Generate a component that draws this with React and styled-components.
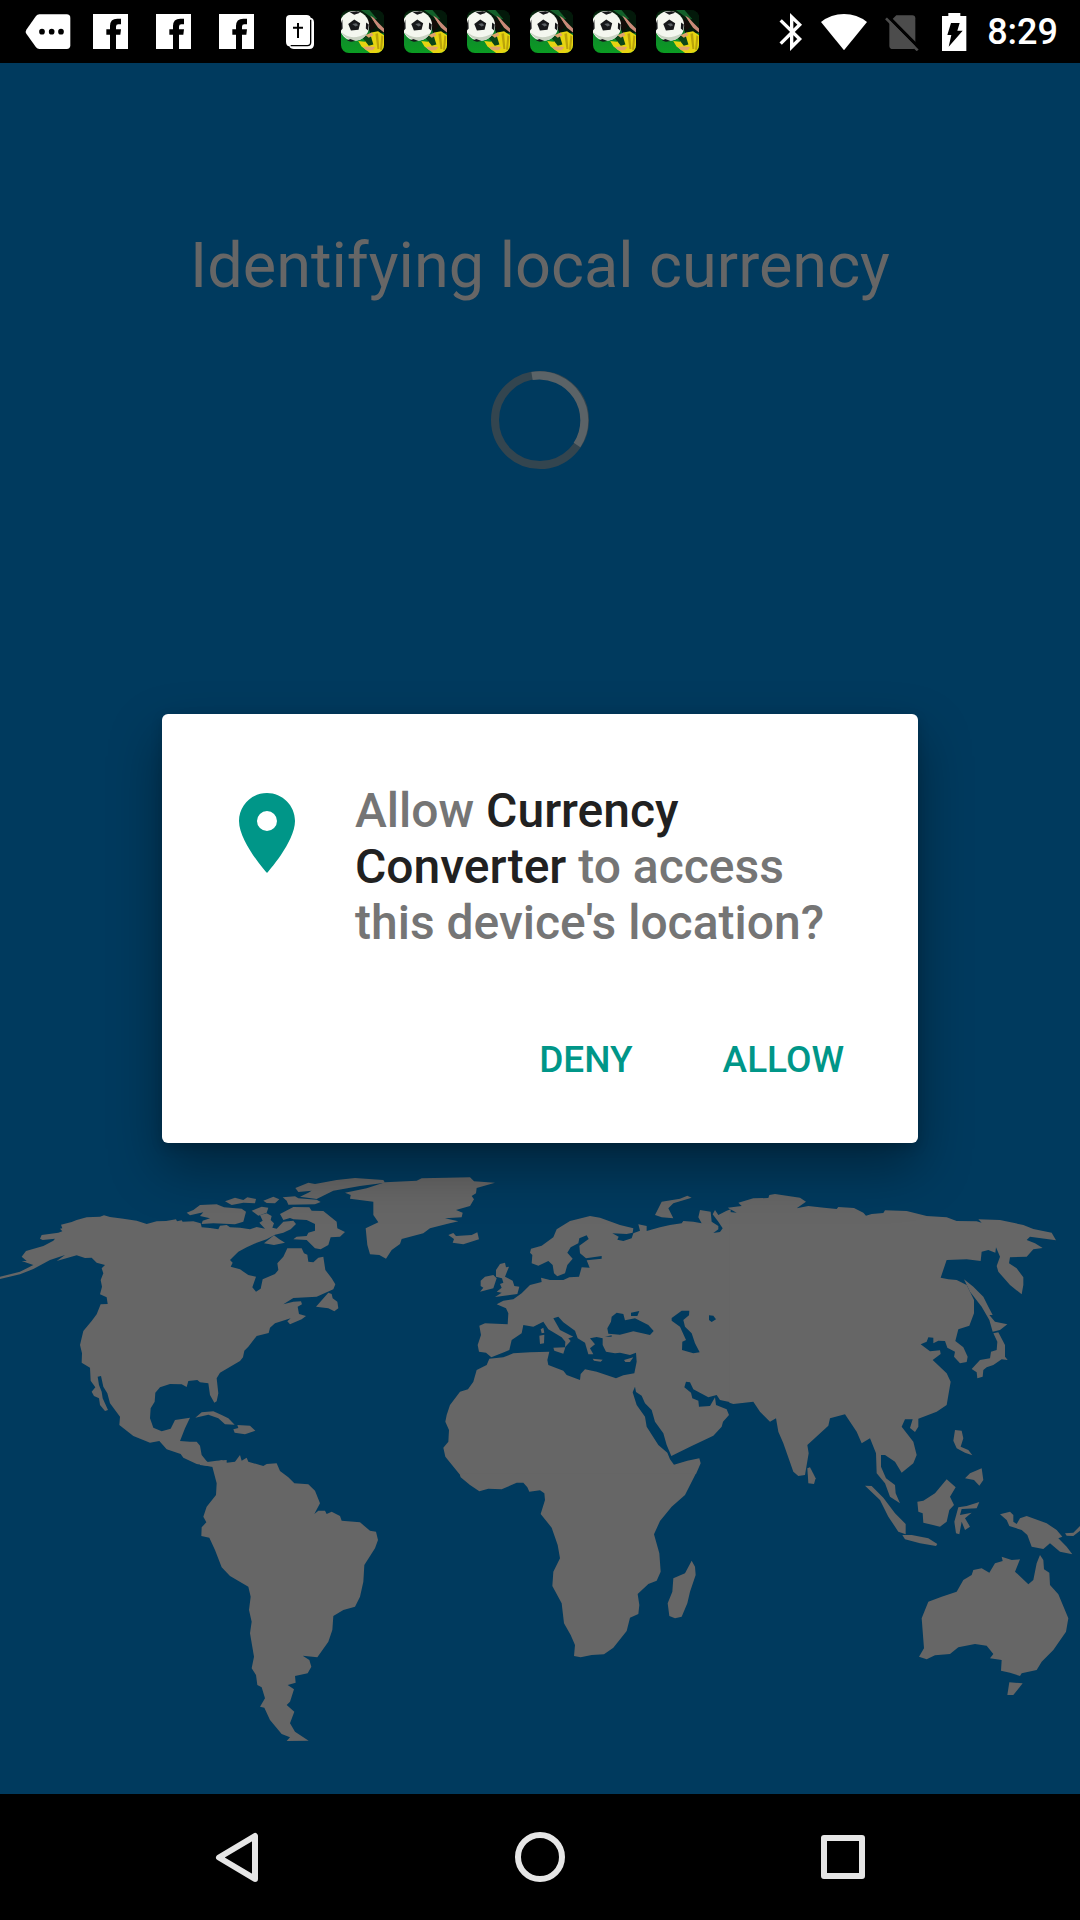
import React from "react";
import styled, { createGlobalStyle } from "styled-components";

const GlobalStyle = createGlobalStyle`
  body {
    margin: 0;
    background: #000;
    font-family: Roboto, "Liberation Sans", sans-serif;
  }
`;

const Screen = styled.div`
  display: flex;
  flex-direction: column;
  min-height: 100vh;
`;

const StatusBar = styled.header`
  display: flex;
  justify-content: space-between;
  align-items: center;
  height: 63px;
  padding: 0 22px 0 16px;
  background: #000;
  color: #fff;
`;

const Notifications = styled.div`
  display: flex;
`;

const NotificationSlot = styled.span`
  display: grid;
  place-items: center;
  width: 63px;
  height: 63px;
`;

const SystemIcons = styled.div`
  display: flex;
  align-items: center;
  gap: 18px;
`;

const Clock = styled.time`
  font-size: 36px;
  line-height: 44px;
  font-weight: 500;
`;

const Main = styled.main`
  flex: 1;
  display: grid;
  background: #003a5e;
`;

const Splash = styled.section`
  grid-area: 1 / 1;
  display: flex;
  flex-direction: column;
  align-items: center;
  padding: 166px 0 47px;
`;

const Title = styled.h1`
  margin: 0 0 68px;
  color: #666;
  font-size: 63px;
  line-height: 74px;
  font-weight: 400;
`;

const WorldMap = styled.svg`
  display: block;
  width: 100%;
  margin-top: auto;
  fill: #666;
  fill-rule: evenodd;
`;

const DialogLayer = styled.div`
  grid-area: 1 / 1;
  display: grid;
  grid-template-columns: 70%;
  place-content: center;
`;

const Dialog = styled.section`
  z-index: 1;
  padding: 69px 53px 35px 57px;
  border-radius: 6px;
  background: #fff;
  box-shadow: 0 24px 52px rgba(0, 0, 0, 0.36), 0 4px 12px rgba(0, 0, 0, 0.16);
`;

const DialogBody = styled.div`
  display: flex;
  align-items: flex-start;
  gap: 40px;
`;

const PinIcon = styled.svg`
  flex: none;
  width: 96px;
  height: 96px;
  margin-top: 2px;
  fill: #009688;
`;

const Message = styled.p`
  flex: 1;
  margin: 0;
  padding-right: 12px;
  color: #757575;
  font-size: 48px;
  line-height: 56px;
  font-weight: 500;
`;

const AppName = styled.strong`
  color: #212121;
  font-weight: 500;
`;

const Actions = styled.div`
  display: flex;
  justify-content: flex-end;
  gap: 48px;
  margin-top: 61px;
`;

const ActionButton = styled.button`
  height: 96px;
  padding: 0 21px;
  border: 0;
  background: none;
  color: #009688;
  font: 500 37px/44px Roboto, "Liberation Sans", sans-serif;
  text-transform: uppercase;
`;

const NavBar = styled.nav`
  display: flex;
  height: 126px;
  padding: 0 8%;
  background: #000;
`;

const NavButton = styled.button`
  flex: 1;
  display: grid;
  place-items: center;
  padding: 0;
  border: 0;
  background: none;
`;

const NavGlyph = styled.svg`
  width: 52px;
  height: 52px;
  fill: none;
  stroke: #e6e6e6;
  stroke-width: 6;
  stroke-linejoin: round;
`;

const MessageTag = () => (
  <svg width="46" height="36" viewBox="0 0 138 108">
    <path fill="#fff" d="M33 6Q37 1 43 1H125Q136 1 136 12V94Q136 105 125 105H43Q37 105 33 100L4 59Q0 53 4 47Z" />
    <circle cx="51" cy="53" r="8.500" />
    <circle cx="80" cy="53" r="8.500" />
    <circle cx="108" cy="53" r="8.500" />
  </svg>
);

const Facebook = () => (
  <svg width="35" height="35" viewBox="0 0 105 105">
    <path fill="#fff" d="M0 0H105V105H0Z" />
    <path fill="#000" d="M51 105V62H40V46H51V36Q51 14 73 14H84V31H76Q69 31 69 38V46H84L82 62H69V105Z" />
  </svg>
);

const Bible = () => (
  <svg width="28" height="34" viewBox="0 0 84 102">
    <path fill="#fff" d="M12 0H62Q72 0 74 8Q84 10 84 22V88Q84 102 70 102H24Q13 102 10 94Q0 92 0 80V12Q0 0 12 0Z" />
    <path fill="none" stroke="#000" strokeWidth="4" d="M74 14V82Q74 92 64 92H14" />
    <path stroke="#000" strokeWidth="6" d="M36 24V69M21 38H51" />
  </svg>
);

const Soccer = () => (
  <svg width="43" height="43" viewBox="0 0 130 130">
    <defs>
      <clipPath id="soccer-tile">
        <rect width="130" height="130" rx="24" />
      </clipPath>
      <linearGradient id="soccer-grass" x1="0" y1="0" x2="0" y2="1">
        <stop offset="0" stopColor="#041608" />
        <stop offset="0.6" stopColor="#0f8a2c" />
        <stop offset="1" stopColor="#0b9c22" />
      </linearGradient>
    </defs>
    <g clipPath="url(#soccer-tile)">
      <path fill="url(#soccer-grass)" d="M0 0H130V130H0Z" />
      <path fill="#03190a" d="M70 0H130V70L90 72L76 40Z" />
      <path fill="#12602a" d="M60 0H86L110 28L94 24Z" />
      <path fill="#c98a78" d="M88 17Q100 22 112 38L130 56V68L112 54L100 36Z" />
      <path fill="#120c08" d="M76 26L98 34L104 52L90 64Z" />
      <path fill="#e6d411" d="M92 68L112 64L130 76V130H88L62 110L52 94L72 96Z" />
      <path fill="#b9a30a" d="M104 72L110 118H116L112 70ZM122 76L118 120H124L128 80Z" />
      <path fill="#0b4517" d="M62 80L88 72L98 104L84 108Z" />
      <path fill="#e0a36c" d="M66 112Q84 108 104 112L96 122H76ZM74 76L92 68L98 76L84 84Z" />
      <circle cx="40" cy="48" r="45" fill="#f4f7ef" />
      <path fill="#c9d2c2" d="M0 66Q30 96 78 70Q64 94 40 92Q12 90 0 66Z" />
      <path fill="#16181a" d="M22 42L40 29L58 40L53 60L30 62ZM26 6L48 4L58 8L40 14ZM0 40L4 28L5 56L0 62ZM76 38L84 44L82 62L75 56ZM18 92L28 88L44 94L30 96Z" />
      <path fill="#5c6265" d="M34 42L46 40L52 46L44 50Z" />
    </g>
  </svg>
);

const Bluetooth = () => (
  <svg width="24" height="38" viewBox="0 0 72 114">
    <path fill="none" stroke="#fff" strokeWidth="10" d="M5 22L62 78L38 102V12L62 35L5 92" />
  </svg>
);

const Wifi = () => (
  <svg width="46" height="38" viewBox="0 0 138 114">
    <path fill="#fff" d="M0 27Q30 3 69 3T138 27L69 112Z" />
  </svg>
);

const NoSim = () => (
  <svg width="36" height="38" viewBox="0 0 108 114">
    <path fill="#4c4c4c" d="M34 7H82Q91 7 91 16V98Q91 108 82 108H24Q13 108 13 98V28Z" />
    <path stroke="#000" strokeWidth="10" d="M9 10L104 106" />
    <path stroke="#4c4c4c" strokeWidth="8" d="M3 16L98 112" />
  </svg>
);

const Battery = () => (
  <svg width="30" height="38" viewBox="0 0 90 114">
    <path fill="#fff" d="M28 0H64V9H82V114H9V9H28Z" />
    <path fill="#000" d="M36 30H62L55 53H71L29 101L37 66H25Z" />
  </svg>
);

const Spinner = () => (
  <svg width="98" height="98" viewBox="0 0 98 98" role="img" aria-label="Loading">
    <circle cx="49" cy="49" r="45" fill="none" stroke="#33454f" strokeWidth="8" />
    <path fill="none" stroke="#5b6367" strokeWidth="8" d="M41 5A45 45 0 0 1 86 74" />
  </svg>
);

/* Each region is drawn on its own sheet, in thirds of a pixel. */
const regions = [
  {
    name: "North America",
    x: 0,
    y: 0,
    shapes: [
      "M0 350L60 335L100 315L65 303L80 303L65 290L78 273L130 258L160 242L165 236L128 240L120 236L125 225L175 218L187 214L180 206L187 205L183 194L215 186L230 180L260 172L300 170L312 166L330 171L370 176L410 182L440 192L470 184L498 183L528 178L531 184L545 181L548 185L580 184L602 190L605 202L630 204L655 208L660 197L680 195L690 202L720 203L750 208L770 201L795 206L778 188L788 182L780 165L800 160L815 168L812 180L822 190L817 203L830 206L850 185L880 182L888 192L872 208L850 218L825 224L800 238L770 248L740 262L715 275L690 300L698 308L692 320L720 328L745 345L768 350L757 382L768 395L782 386L788 358L825 342L835 330L832 310L850 290L862 265L905 265L912 280L922 284L925 305L940 307L955 293L970 290L976 330L995 355L1006 373L1000 388L950 410L880 414L850 433L880 425L903 424L906 433L893 440L897 462L918 468L905 478L870 493L862 484L872 475L825 490L810 503L806 519L770 528L745 560L733 572L729 592L720 603L660 638L650 655L655 700L650 724L643 728L630 705L625 670L600 667L592 660L565 663L560 681L545 673L510 672L480 682L466 698L464 725L452 745L450 775L460 803L485 814L512 806L525 780L570 773L555 805L540 843L570 845L590 845L600 857L605 885L622 906L650 902L680 900L680 930L640 920L590 912L550 893L542 882L500 868L478 843L450 848L400 828L358 795L360 770L330 730L322 700L310 680L303 648L293 650L297 675L305 695L308 715L324 750L315 753L300 735L297 715L282 708L275 695L286 682L272 662L270 623L245 608L246 580L240 555L250 513L275 483L290 463L302 433L323 432L320 412L300 403L306 380L302 360L310 340L305 325L315 315L290 308L275 293L255 294L230 286L170 303L195 285L150 300L100 327L60 343L0 357Z",
      "M560 158L580 150L600 135L650 133L672 142L725 146L738 155L730 185L705 193L640 190L605 192L608 182L630 175L600 168L610 157L570 166Z",
      "M675 124L705 113L730 120L742 112L768 117L765 130L730 128L695 135Z",
      "M755 152L785 140L805 143L800 158L775 167Z",
      "M790 122L820 110L838 118L825 130L800 129Z",
      "M848 112L885 109L895 115L950 119L962 126L945 133L865 134L860 122Z",
      "M886 84L925 68L945 72L1010 60L1065 54L1150 60L1155 68L1080 78L1000 92L950 117L900 110L925 98L935 92L895 96Z",
      "M840 162L880 141L928 142L935 152L970 153L1010 185L1012 205L1035 216L1020 230L992 232L985 255L962 268L945 265L920 240L880 238L890 230L920 228L925 218L945 212L945 192L920 180L880 178L870 174L850 180Z",
      "M792 250L822 226L838 238L855 248L822 255Z",
      "M948 440L985 398L995 402L998 415L1012 425L1015 445L1003 454L985 445Z",
      "M586 773L605 757L640 754L665 765L685 775L704 794L675 793L655 775L625 764Z",
      "M700 808L715 804L712 795L750 797L766 812L735 823L704 818Z",
    ],
  },
  {
    name: "Europe and North Africa",
    x: 990,
    y: 0,
    shapes: [
      "M45 98L110 85L165 67L260 62L275 55L350 53L420 52L432 64L495 68L440 84L438 100L425 108L432 118L420 138L378 150L398 158L395 172L345 175L385 184L350 192L300 205L280 220L215 237L210 252L185 270L168 296L148 285L120 283L112 255L107 205L145 187L130 165L130 125L60 116L62 105Z",
      "M355 225L370 219L378 228L425 225L442 217L447 238L400 253L368 248L372 237Z",
      "M498 330L510 312L525 308L528 322L537 320L525 350L548 362L553 378L568 380L562 402L495 411L515 398L500 395L515 383L510 372L520 368L516 355L498 350Z",
      "M452 362L465 350L490 345L500 355L490 385L450 395L460 383L452 378Z",
      "M975 165L995 125L1050 116L1072 107L1085 113L1030 130L1015 145L1030 175L995 172Z",
      "M1202 148L1190 152L1165 165L1155 150L1148 163L1165 185L1178 205L1170 216L1150 219L1165 208L1165 198L1145 185L1142 155L1110 150L1105 172L1115 190L1090 185L1060 183L1055 190L1020 195L990 202L950 213L950 198L925 193L930 212L910 220L905 235L880 243L862 239L866 230L847 220L890 222L908 218L910 205L870 195L810 173L780 168L720 183L680 208L670 232L635 257L603 266L600 278L607 285L605 310L625 317L655 303L668 315L672 340L682 349L705 340L712 315L728 296L712 278L722 262L745 250L748 235L770 226L776 237L748 257L750 280L768 295L815 288L815 296L770 301L779 323L755 322L747 350L718 352L700 360L660 360L633 353L635 366L600 375L575 400L550 418L520 422L500 433L528 445L535 460L533 493L465 490L448 497L453 525L443 555L447 575L468 578L484 592L522 577L538 570L545 540L575 520L580 495L610 500L640 485L655 508L695 532L706 545L705 562L722 543L715 535L730 530L690 510L670 475L685 470L700 487L735 512L743 535L765 548L775 583L790 583L780 565L795 553L780 535L800 531L818 535L818 555L828 575L855 580L870 578L900 585L918 578L920 605L913 640L880 646L858 655L800 635L765 628L752 642L750 660L710 645L700 632L655 615L652 600L658 575L600 577L550 580L520 592L478 596L470 615L440 630L430 665L414 688L390 695L360 735L350 765L346 785L357 810L355 845L340 863L346 890L388 942L1098 942L1112 910L1108 895L1072 902L1032 914L1020 898L1012 878L985 855L950 800L945 770L920 735L908 697L915 680L918 696L935 707L945 730L965 750L975 785L1000 820L1010 855L1024 888L1085 858L1150 827L1175 800L1179 785L1197 765L1190 748L1158 735L1155 712L1140 738L1107 740L1105 722L1087 715L1083 698L1063 682L1068 665L1080 667L1090 688L1135 712L1160 705L1170 720L1202 727Z M860 458L845 470L843 485L832 505L835 521L870 524L910 514L960 525L971 513L955 495L915 475L885 481L880 462Z M903 458L928 453L922 468L903 468Z M825 530L845 526L845 530Z M1055 452L1078 452L1077 466L1060 480L1065 500L1085 520L1095 550L1109 577L1090 580L1056 570L1057 545L1068 540L1050 500L1025 482L1025 474Z M1137 466L1150 467L1158 478L1145 486L1137 480Z",
      "M632 508L640 503L643 518L635 520Z",
      "M628 527L643 524L642 550L630 552Z",
      "M670 563L706 562L700 581L673 572Z",
      "M788 596L818 599L812 605L792 602Z",
      "M882 600L910 592L900 606L886 606Z",
    ],
  },
  {
    name: "Asia",
    x: 2100,
    y: 0,
    shapes: [
      "M88 156L110 158L83 143L125 138L115 128L160 115L205 114L208 105L225 102L300 113L318 125L290 145L325 138L372 143L410 147L415 141L462 144L490 158L498 167L515 162L550 159L555 151L620 153L680 168L740 172L770 183L830 184L845 188L835 178L900 180L970 195L1000 207L1055 218L1068 241L990 230L980 240L1005 250L1028 264L1000 268L980 290L930 292L927 310L950 325L970 352L970 375L965 403L930 375L895 335L890 318L900 290L888 262L886 278L865 270L845 275L842 303L800 298L740 300L722 353L745 358L770 360L800 375L822 420L822 460L808 497L775 508L766 543L790 562L803 590L800 606L780 610L762 590L765 575L742 563L735 543L715 542L700 550L700 533L685 532L680 545L662 553L690 574L720 571L722 582L698 600L740 640L752 665L740 735L710 755L655 776L655 800L645 816L630 804L638 778L615 778L605 800L640 845L650 885L640 910L605 938L585 905L555 885L543 885L543 920L558 955L585 975L587 1000L600 1030L570 1010L555 970L530 940L528 880L510 835L485 850L470 815L435 763L390 775L385 797L322 855L326 880L315 945L295 948L280 935L250 850L235 815L228 775L210 785L180 755L160 725L100 732L88 728Z",
      "M322 925L330 922L347 955L342 972L325 970Z",
      "M792 358L820 380L850 410L865 440L878 465L868 465L885 485L922 493L900 510L878 515L868 480L845 440L810 395Z",
      "M880 520L895 517L915 555L915 590L923 600L905 598L880 615L860 622L850 630L848 650L832 655L830 637L815 627L840 600L870 595L873 575L890 570L892 545Z",
    ],
  },
  {
    name: "South America",
    x: 540,
    y: 840,
    shapes: [
      "M60 60L100 70L125 60L140 68L165 65L180 45L185 62L200 53L205 65L250 78L260 72L290 70L300 93L325 112L343 130L385 133L405 152L420 190L403 222L415 212L435 212L440 222L455 215L480 228L485 242L540 247L570 272L588 275L594 300L585 325L553 375L550 425L540 470L525 500L490 510L460 528L457 570L445 605L412 652L368 647L388 660L394 680L383 700L345 708L347 728L323 735L342 748L330 785L320 795L343 815L330 850L345 875L386 902L320 903L330 892L305 882L270 840L253 803L240 800L255 775L245 742L232 735L228 705L215 685L222 650L210 580L215 545L207 510L212 470L205 440L150 408L125 382L105 330L88 293L64 288L65 262L79 247L70 230L80 200L108 165L110 130L97 80L60 75Z",
    ],
  },
  {
    name: "Africa",
    x: 1200,
    y: 840,
    shapes: [
      "M178 100L182 112L210 135L238 154L265 146L305 148L350 128L370 128L382 142L388 155L420 151L433 160L435 180L422 222L455 263L473 315L480 355L460 395L457 438L485 490L492 550L512 585L525 615L522 648L542 652L575 645L612 643L640 623L680 573L690 533L715 522L718 495L713 462L745 432L770 422L782 395L778 340L762 283L780 243L815 200L855 165L888 100Z",
      "M875 362L885 380L887 405L870 455L862 490L845 530L825 535L808 528L803 490L817 455L820 415L855 400Z",
    ],
  },
  {
    name: "Oceania",
    x: 2460,
    y: 720,
    shapes: [
      "M135 257L155 258L190 293L225 340L257 372L257 403L235 395L205 350L180 300Z",
      "M247 405L275 405L325 415L352 432L348 438L300 430L255 418Z",
      "M292 305L310 302L345 280L380 238L407 262L390 290L402 315L388 330L380 365L360 380L310 368L308 340L295 335Z",
      "M415 322L440 318L478 306L470 325L425 327L420 345L455 338L435 355L450 380L435 390L425 365L418 403L408 400L403 365Z",
      "M405 90L425 92L430 115L422 140L445 150L457 166L435 158L410 145L400 122Z",
      "M435 235L450 220L485 205L490 240L478 257L462 240Z",
      "M540 343L570 335L580 345L580 365L590 372L600 355L620 348L680 370L710 390L727 410L715 415L740 440L757 463L720 455L690 430L670 447L635 440L622 405L605 390L568 378L560 360Z",
      "M735 400L760 398L780 378V392L760 408L740 407Z",
      "M660 465L670 480L672 508L688 518L690 555L715 583L745 655L738 695L700 750L665 785L650 810L605 820L600 828L570 818L543 812L545 780L530 778L510 775L520 762L500 737L465 732L415 742L390 762L345 766L320 778L297 770L312 745L305 655L325 605L365 590L410 575L430 540L455 525L460 510L485 505L508 518L525 490L548 483L545 470L575 480L600 478L585 515L625 553L640 540L650 490Z",
      "M568 847L608 850L580 885L562 885Z",
    ],
  },
];

const notifications = [MessageTag, Facebook, Facebook, Facebook, Bible, Soccer, Soccer, Soccer, Soccer, Soccer, Soccer];

export default function App() {
  return (
    <Screen>
      <GlobalStyle />
      <StatusBar>
        <Notifications>
          {notifications.map((Icon, i) => (
            <NotificationSlot key={i}>
              <Icon />
            </NotificationSlot>
          ))}
        </Notifications>
        <SystemIcons>
          <Bluetooth />
          <Wifi />
          <NoSim />
          <Battery />
          <Clock>8:29</Clock>
        </SystemIcons>
      </StatusBar>

      <Main>
        <Splash>
          <Title>Identifying local currency</Title>
          <Spinner />
          <WorldMap viewBox="0 30 3240 1731" aria-hidden="true">
            {regions.map((region) => (
              <g key={region.name} transform={`translate(${region.x} ${region.y})`}>
                {region.shapes.map((d) => (
                  <path key={d} d={d} />
                ))}
              </g>
            ))}
          </WorldMap>
        </Splash>

        <DialogLayer>
          <Dialog role="dialog" aria-modal="true" aria-labelledby="permission-message">
            <DialogBody>
              <PinIcon viewBox="0 0 24 24" aria-hidden="true">
                <path d="M12 2C8.130 2 5 5.130 5 9c0 5.250 7 13 7 13s7-7.750 7-13c0-3.870-3.130-7-7-7zm0 9.500a2.500 2.500 0 1 1 0-5 2.500 2.500 0 0 1 0 5z" />
              </PinIcon>
              <Message id="permission-message">
                Allow <AppName>Currency Converter</AppName> to access this device's location?
              </Message>
            </DialogBody>
            <Actions>
              <ActionButton type="button">Deny</ActionButton>
              <ActionButton type="button">Allow</ActionButton>
            </Actions>
          </Dialog>
        </DialogLayer>
      </Main>

      <NavBar>
        <NavButton type="button" aria-label="Back">
          <NavGlyph viewBox="0 0 52 52">
            <path d="M43 5V48L7 26.500Z" />
          </NavGlyph>
        </NavButton>
        <NavButton type="button" aria-label="Home">
          <NavGlyph viewBox="0 0 52 52">
            <circle cx="26" cy="26" r="22" />
          </NavGlyph>
        </NavButton>
        <NavButton type="button" aria-label="Overview">
          <NavGlyph viewBox="0 0 52 52">
            <rect x="8" y="7" width="38" height="38" />
          </NavGlyph>
        </NavButton>
      </NavBar>
    </Screen>
  );
}
